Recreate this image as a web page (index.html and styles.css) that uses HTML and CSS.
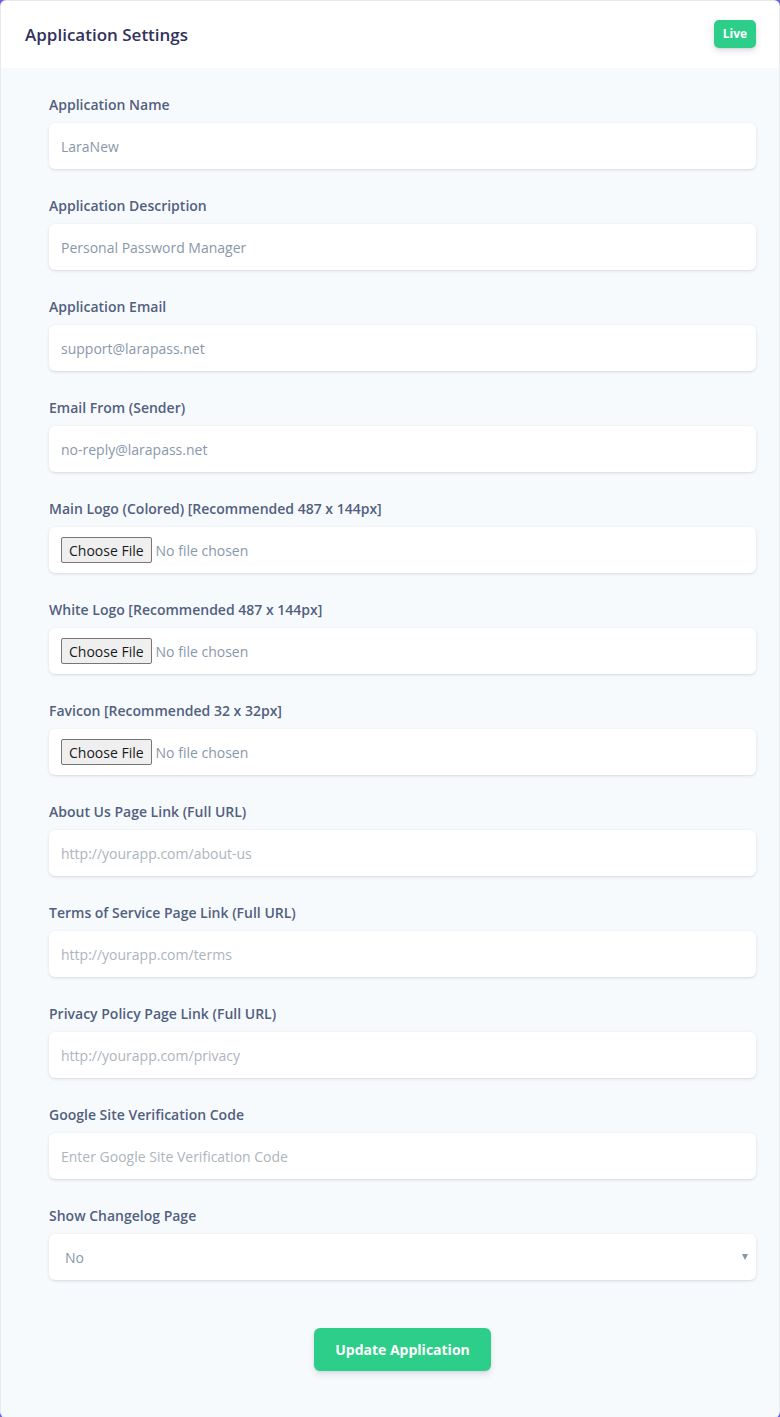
FILE: index.html
```html
<!DOCTYPE html>
<html lang="en">
<head>
<meta charset="utf-8">
<title>Application Settings</title>
<link rel="stylesheet" href="styles.css">
</head>
<body>
<div class="card">
  <div class="card-header">
    <h3 class="card-title">Application Settings</h3>
    <span class="badge">Live</span>
  </div>
  <div class="card-body">
    <form class="form">
      <div class="group">
        <label class="label">Application Name</label>
        <input class="control" type="text" value="LaraNew">
      </div>
      <div class="group">
        <label class="label">Application Description</label>
        <input class="control" type="text" value="Personal Password Manager">
      </div>
      <div class="group">
        <label class="label">Application Email</label>
        <input class="control" type="text" value="support@larapass.net">
      </div>
      <div class="group">
        <label class="label">Email From (Sender)</label>
        <input class="control" type="text" value="no-reply@larapass.net">
      </div>
      <div class="group">
        <label class="label">Main Logo (Colored) [Recommended 487 x 144px]</label>
        <div class="control file"><span class="file-btn">Choose File</span><span class="file-name">No file chosen</span></div>
      </div>
      <div class="group">
        <label class="label">White Logo [Recommended 487 x 144px]</label>
        <div class="control file"><span class="file-btn">Choose File</span><span class="file-name">No file chosen</span></div>
      </div>
      <div class="group">
        <label class="label">Favicon [Recommended 32 x 32px]</label>
        <div class="control file"><span class="file-btn">Choose File</span><span class="file-name">No file chosen</span></div>
      </div>
      <div class="group">
        <label class="label">About Us Page Link (Full URL)</label>
        <input class="control" type="text" placeholder="http://yourapp.com/about-us">
      </div>
      <div class="group">
        <label class="label">Terms of Service Page Link (Full URL)</label>
        <input class="control" type="text" placeholder="http://yourapp.com/terms">
      </div>
      <div class="group">
        <label class="label">Privacy Policy Page Link (Full URL)</label>
        <input class="control" type="text" placeholder="http://yourapp.com/privacy">
      </div>
      <div class="group">
        <label class="label">Google Site Verification Code</label>
        <input class="control" type="text" placeholder="Enter Google Site Verification Code">
      </div>
      <div class="group">
        <label class="label">Show Changelog Page</label>
        <div class="control select"><span class="select-value">No</span><span class="caret"></span></div>
      </div>
      <div class="actions">
        <button class="btn" type="button">Update Application</button>
      </div>
    </form>
  </div>
</div>
</body>
</html>
```
FILE: styles.css
```css
html, body {
  margin: 0;
  padding: 0;
}
body {
  background: #6a5ee8;
  font-family: "Open Sans", "Noto Sans", sans-serif;
}
.card {
  min-height: 1417px;
  box-sizing: border-box;
  background: #f7fafc;
  border: 1px solid rgba(0, 0, 0, 0.06);
  border-radius: 6px;
  overflow: hidden;
  display: flex;
  flex-direction: column;
}
.card-header {
  height: 67px;
  box-sizing: border-box;
  background: #fff;
  display: flex;
  align-items: center;
  justify-content: space-between;
  padding: 0 23px 0 24px;
}
.card-title {
  margin: 2px 0 0;
  font-size: 17px;
  font-weight: 600;
  color: #32325d;
  line-height: 1.2;
}
.badge {
  width: 42px;
  height: 28px;
  box-sizing: border-box;
  display: flex;
  align-items: center;
  justify-content: center;
  background: #2dce89;
  color: #fff;
  font-size: 12px;
  font-weight: 700;
  border-radius: 5px;
  box-shadow: 0 3px 6px rgba(50, 50, 93, 0.15), 0 1px 2px rgba(0, 0, 0, 0.08);
  margin-bottom: 2px;
}
.card-body {
  flex: 1;
  padding: 27px 23px 46px 48px;
}
.form {
  display: flex;
  flex-direction: column;
}
.group {
  display: flex;
  flex-direction: column;
  margin-bottom: 27px;
}
.label {
  font-size: 14px;
  font-weight: 600;
  line-height: 20px;
  color: #525f7f;
  margin-bottom: 8px;
}
.control {
  height: 46px;
  box-sizing: border-box;
  border: 0;
  border-radius: 6px;
  background: #fff;
  box-shadow: 0 1px 3px rgba(50, 50, 93, 0.15), 0 1px 0 rgba(0, 0, 0, 0.02);
  padding: 0 12px;
  font-family: "Open Sans", "Noto Sans", sans-serif;
  font-size: 14px;
  color: #8898aa;
  outline: none;
  width: 100%;
}
.control::placeholder {
  color: #adb5bd;
}
.file {
  display: flex;
  align-items: center;
}
.file-btn {
  box-sizing: border-box;
  height: 26px;
  display: flex;
  align-items: center;
  padding: 0 7px;
  background: #efefef;
  border: 1px solid #767676;
  border-radius: 2px;
  color: #1a1a1a;
  font-size: 14px;
  margin-right: 4px;
}
.file-name {
  color: #8898aa;
}
.select {
  display: flex;
  align-items: center;
  justify-content: space-between;
  padding: 0 8px 0 16px;
}
.caret {
  width: 0;
  height: 0;
  border-left: 3.5px solid transparent;
  border-right: 3.5px solid transparent;
  border-top: 6px solid #8898aa;
}
.actions {
  display: flex;
  justify-content: center;
  margin-top: 21px;
}
.btn {
  width: 177px;
  height: 43px;
  border: 0;
  border-radius: 6px;
  background: #2dce89;
  color: #fff;
  font-family: "Open Sans", "Noto Sans", sans-serif;
  font-size: 14px;
  font-weight: 700;
  box-shadow: 0 4px 6px rgba(50, 50, 93, 0.11), 0 1px 3px rgba(0, 0, 0, 0.08);
  cursor: pointer;
}
```
